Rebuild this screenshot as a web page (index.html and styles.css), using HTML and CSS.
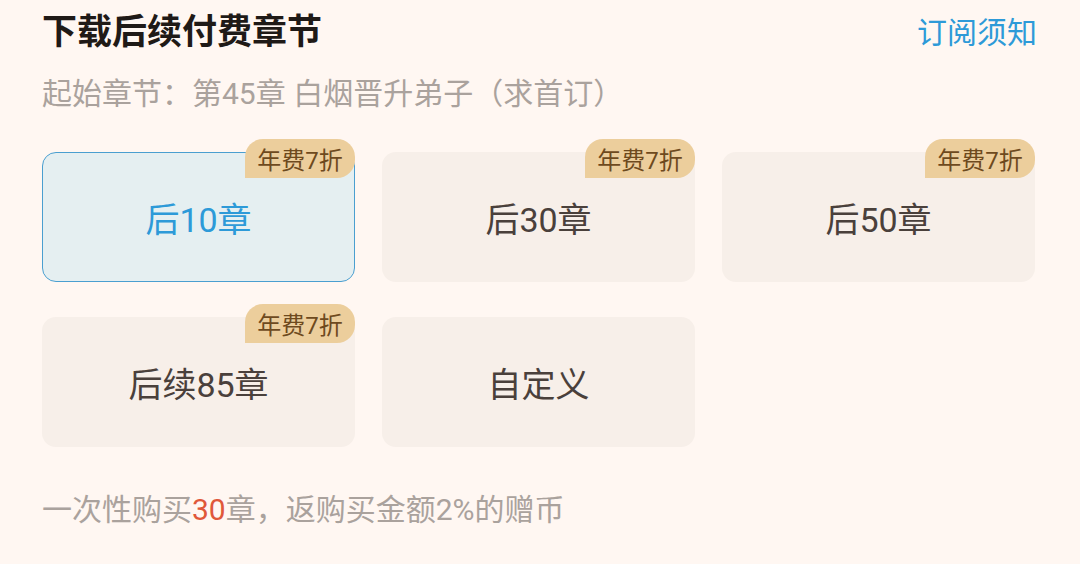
FILE: index.html
```html
<!DOCTYPE html>
<html lang="zh-CN">
<head>
<meta charset="UTF-8">
<meta name="viewport" content="width=device-width, initial-scale=1.0">
<title>下载后续付费章节</title>
<link rel="stylesheet" href="styles.css">
</head>
<body>
    <div class="panel">
        <div class="header">
            <h2 class="title">下载后续付费章节</h2>
            <a class="notice" href="#">订阅须知</a>
        </div>
        <p class="start">起始章节：第45章 白烟晋升弟子（求首订）</p>

        <div class="options">
            <div class="option selected">
                <span class="badge">年费7折</span>
                后10章
            </div>
            <div class="option">
                <span class="badge">年费7折</span>
                后30章
            </div>
            <div class="option">
                <span class="badge">年费7折</span>
                后50章
            </div>
            <div class="option">
                <span class="badge">年费7折</span>
                后续85章
            </div>
            <div class="option">自定义</div>
        </div>

        <p class="tip">一次性购买<span class="num">30</span>章，返购买金额2%的赠币</p>
    </div>
</body>
</html>
```

FILE: styles.css
```css
body {
    margin: 0;
    background-color: #fff7f2;
    font-family: Roboto, "Noto Sans CJK SC", sans-serif;
    color: #4a403b;
}
.panel {
    padding: 0 43px 0 42px;
}
.header {
    height: 66px;
    display: flex;
    align-items: center;
    justify-content: space-between;
}
.title {
    margin: 0;
    font-size: 35px;
    font-weight: bold;
    color: #1f1a17;
    line-height: 44px;
}
.notice {
    font-size: 30px;
    color: #2d9ad8;
    text-decoration: none;
    line-height: 40px;
}
.start {
    margin: 8px 0 0;
    font-size: 30px;
    line-height: 40px;
    color: #aaa29d;
}
.options {
    margin-top: 38px;
    display: grid;
    grid-template-columns: repeat(3, 313px);
    column-gap: 27px;
    row-gap: 35px;
}
.option {
    position: relative;
    height: 130px;
    box-sizing: border-box;
    border-radius: 14px;
    background-color: #f7efe9;
    display: flex;
    align-items: center;
    justify-content: center;
    font-size: 34px;
    color: #4a403b;
}
.option.selected {
    background-color: #e5eff1;
    border: 1px solid #4a9fd0;
    color: #2d9ad8;
}
.badge {
    position: absolute;
    top: -13px;
    right: 0;
    height: 39px;
    width: 110px;
    display: flex;
    align-items: center;
    justify-content: center;
    background-color: #ecce9c;
    color: #6e4a1e;
    font-size: 24px;
    border-radius: 18px 18px 18px 0;
}
.option.selected .badge {
    top: -14px;
    right: -1px;
}
.tip {
    margin: 43px 0 0;
    font-size: 30px;
    line-height: 40px;
    color: #aaa29d;
}
.num {
    color: #e0583a;
}
```
